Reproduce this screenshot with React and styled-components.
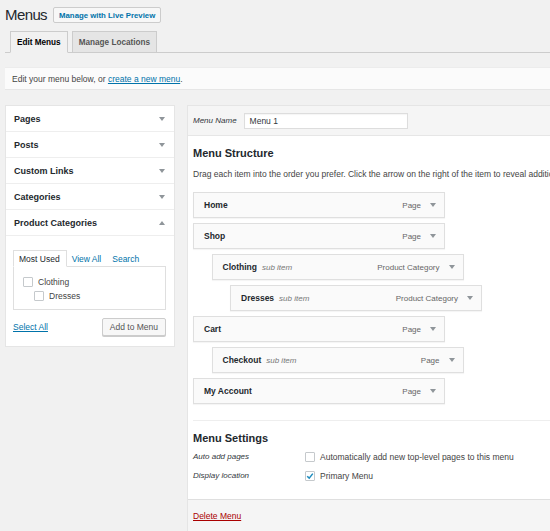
import React from 'react';
import styled, { createGlobalStyle } from 'styled-components';

const Global = createGlobalStyle`
  html, body { margin:0; padding:0; background:#f1f1f1; }
  body {
    font-family:"Liberation Sans", Arial, sans-serif;
    color:#444;
    font-size:8.5px;
    overflow:hidden;
    width:550px;
  }
  * { box-sizing:border-box; }
`;

const Page = styled.div`
  padding:7px 0 0 5px;
  width:560px;
`;

const TitleRow = styled.div`
  display:flex;
  align-items:center;
  gap:6px;
`;

const Title = styled.h1`
  margin:0;
  font-size:15px;
  letter-spacing:-0.6px;
  font-weight:400;
  color:#23282d;
  line-height:16px;
`;

const PreviewBtn = styled.a`
  display:flex;
  align-items:center;
  height:16px;
  padding:0 5px;
  border:1px solid #ccc;
  background:#f7f7f7;
  color:#0073aa;
  font-size:7.8px;
  font-weight:700;
  border-radius:2px;
`;

const Tabs = styled.div`
  display:flex;
  gap:4px;
  margin-top:8px;
  padding-left:5px;
  border-bottom:1px solid #ccc;
`;

const Tab = styled.div`
  height:22px;
  margin-bottom:-1px;
  padding:0 6px;
  display:flex;
  align-items:center;
  border:1px solid #ccc;
  border-bottom:1px solid ${({active}) => active ? '#f1f1f1' : '#ccc'};
  background:${({active}) => active ? '#f1f1f1' : '#e5e5e5'};
  color:${({active}) => active ? '#000' : '#555'};
  font-size:8.2px;
  font-weight:700;
`;

const Notice = styled.div`
  margin-top:14px;
  height:23px;
  display:flex;
  align-items:center;
  padding-left:7px;
  background:#fbfbfb;
  border-top:1px solid #ececec;
  border-bottom:1px solid #e6e6e6;
  color:#444;
`;

const Link = styled.a`
  color:${({danger}) => danger ? '#a00' : '#0073aa'};
  text-decoration:underline;
`;

const Columns = styled.div`
  display:flex;
  align-items:flex-start;
  gap:12px;
  margin-top:15px;
`;

const Side = styled.div`
  width:170px;
  flex:none;
  background:#fff;
  border:1px solid #e5e5e5;
  border-bottom:none;
`;

const SideHead = styled.div`
  height:26px;
  display:flex;
  align-items:center;
  justify-content:space-between;
  padding:0 9px 0 8px;
  border-bottom:1px solid #eee;
  color:#23282d;
  font-size:9px;
  font-weight:700;
`;

const Arrow = styled.span`
  width:0;
  height:0;
  border-left:3px solid transparent;
  border-right:3px solid transparent;
  ${({up}) => up ? 'border-bottom:4px solid #8f959a;' : 'border-top:4px solid #8f959a;'}
`;

const SideBody = styled.div`
  padding:14px 8px 10px 7px;
  border-bottom:1px solid #e5e5e5;
`;

const MiniTabs = styled.div`
  display:flex;
  align-items:flex-end;
`;

const MiniTab = styled.div`
  height:17px;
  margin-bottom:-1px;
  padding:0 6px 0 5px;
  display:flex;
  align-items:center;
  color:${({active}) => active ? '#23282d' : '#0073aa'};
  font-size:8.5px;
  ${({active}) => active && `
    border:1px solid #dfdfdf;
    border-bottom:1px solid #fff;
    background:#fff;
    position:relative;
  `}
`;

const TabPanel = styled.div`
  height:44px;
  border:1px solid #dfdfdf;
  padding:10px 0 0 9px;
  display:flex;
  flex-direction:column;
  gap:4px;
`;

const CheckRow = styled.label`
  display:flex;
  align-items:center;
  gap:5px;
  padding-left:${({level}) => level * 11}px;
  color:#444;
  font-size:8.5px;
`;

const Box = styled.span`
  width:10px;
  height:10px;
  border:1px solid #c5c9cc;
  border-radius:1px;
  background:#fff;
  flex:none;
  display:flex;
  align-items:center;
  justify-content:center;
`;

const SideFoot = styled.div`
  margin-top:8px;
  display:flex;
  justify-content:space-between;
  align-items:center;
`;

const Button = styled.button`
  height:18px;
  padding:0 7px;
  border:1px solid #ccc;
  border-radius:2px;
  background:#f7f7f7;
  color:#555;
  font-family:inherit;
  font-size:8.5px;
  box-shadow:0 1px 0 #ccc;
`;

const Main = styled.div`
  flex:1;
  background:#fff;
  border:1px solid #e5e5e5;
  border-right:none;
`;

const MainHead = styled.div`
  height:30px;
  display:flex;
  align-items:center;
  gap:7px;
  padding-left:5px;
  background:#f5f5f5;
  border-bottom:1px solid #e6e6e6;
`;

const Label = styled.span`
  font-style:italic;
  color:#32373c;
  font-size:8px;
  width:${({w}) => w || 'auto'};
`;

const Input = styled.div`
  width:164px;
  height:16px;
  border:1px solid #ddd;
  background:#fff;
  display:flex;
  align-items:center;
  padding-left:5px;
  color:#32373c;
  font-size:8.5px;
  box-shadow:inset 0 1px 1px rgba(0,0,0,0.04);
`;

const MainBody = styled.div`
  padding:10px 0 14px 5px;
`;

const Heading = styled.h3`
  margin:0;
  font-size:11px;
  line-height:14px;
  font-weight:700;
  color:#23282d;
`;

const Desc = styled.p`
  margin:8px 0 0;
  line-height:12px;
  white-space:nowrap;
  color:#444;
`;

const Items = styled.div`
  margin-top:12px;
  display:flex;
  flex-direction:column;
  gap:5px;
`;

const Item = styled.div`
  width:252px;
  height:26px;
  margin-left:${({level}) => level * 18.5}px;
  display:flex;
  align-items:center;
  padding:0 8px 0 10px;
  background:#fafafa;
  border:1px solid #dfdfdf;
  box-shadow:0 1px 1px rgba(0,0,0,0.04);
`;

const ItemTitle = styled.span`
  color:#23282d;
  font-weight:700;
  font-size:8.5px;
`;

const Sub = styled.span`
  margin-left:5px;
  font-style:italic;
  color:#777;
  font-size:8px;
`;

const ItemType = styled.span`
  margin-left:auto;
  margin-right:9px;
  color:#666;
  font-size:8px;
`;

const Divider = styled.div`
  margin-top:16px;
  border-top:1px solid #eee;
`;

const Settings = styled.div`
  padding-top:10px;
  ${Heading} { margin-bottom:2px; }
`;

const SetRow = styled.div`
  height:19px;
  display:flex;
  align-items:center;
`;

const Control = styled.label`
  display:flex;
  align-items:center;
  gap:5px;
  color:#444;
  font-size:8.5px;
`;

const MainFoot = styled.div`
  height:32px;
  display:flex;
  align-items:center;
  padding-left:5px;
  background:#f5f5f5;
  border-top:1px solid #dfdfdf;
`;

const Check = () => (
  <svg width="8" height="8" viewBox="0 0 8 8">
    <path d="M1.2 4.2 L3.2 6.1 L6.8 1.6" fill="none" stroke="#1e8cbe" strokeWidth="1.5" />
  </svg>
);

const sideSections = ['Pages', 'Posts', 'Custom Links', 'Categories'];

const menuItems = [
  { title: 'Home', type: 'Page', level: 0 },
  { title: 'Shop', type: 'Page', level: 0 },
  { title: 'Clothing', type: 'Product Category', level: 1, sub: true },
  { title: 'Dresses', type: 'Product Category', level: 2, sub: true },
  { title: 'Cart', type: 'Page', level: 0 },
  { title: 'Checkout', type: 'Page', level: 1, sub: true },
  { title: 'My Account', type: 'Page', level: 0 },
];

export default function App() {
  return (
    <Page>
      <Global />
      <TitleRow>
        <Title>Menus</Title>
        <PreviewBtn>Manage with Live Preview</PreviewBtn>
      </TitleRow>

      <Tabs>
        <Tab active>Edit Menus</Tab>
        <Tab>Manage Locations</Tab>
      </Tabs>

      <Notice>
        Edit your menu below, or&nbsp;<Link>create a new menu</Link>.
      </Notice>

      <Columns>
        <Side>
          {sideSections.map(s => (
            <SideHead key={s}>{s}<Arrow /></SideHead>
          ))}
          <SideHead>Product Categories<Arrow up /></SideHead>
          <SideBody>
            <MiniTabs>
              <MiniTab active>Most Used</MiniTab>
              <MiniTab>View All</MiniTab>
              <MiniTab>Search</MiniTab>
            </MiniTabs>
            <TabPanel>
              <CheckRow level={0}><Box />Clothing</CheckRow>
              <CheckRow level={1}><Box />Dresses</CheckRow>
            </TabPanel>
            <SideFoot>
              <Link>Select All</Link>
              <Button>Add to Menu</Button>
            </SideFoot>
          </SideBody>
        </Side>

        <Main>
          <MainHead>
            <Label>Menu Name</Label>
            <Input>Menu 1</Input>
          </MainHead>
          <MainBody>
            <Heading>Menu Structure</Heading>
            <Desc>Drag each item into the order you prefer. Click the arrow on the right of the item to reveal additional configuration options.</Desc>
            <Items>
              {menuItems.map(it => (
                <Item key={it.title} level={it.level}>
                  <ItemTitle>{it.title}</ItemTitle>
                  {it.sub && <Sub>sub item</Sub>}
                  <ItemType>{it.type}</ItemType>
                  <Arrow />
                </Item>
              ))}
            </Items>
            <Divider />
            <Settings>
              <Heading>Menu Settings</Heading>
              <SetRow>
                <Label w="112px">Auto add pages</Label>
                <Control><Box />Automatically add new top-level pages to this menu</Control>
              </SetRow>
              <SetRow>
                <Label w="112px">Display location</Label>
                <Control><Box><Check /></Box>Primary Menu</Control>
              </SetRow>
            </Settings>
          </MainBody>
          <MainFoot>
            <Link danger>Delete Menu</Link>
          </MainFoot>
        </Main>
      </Columns>
    </Page>
  );
}
